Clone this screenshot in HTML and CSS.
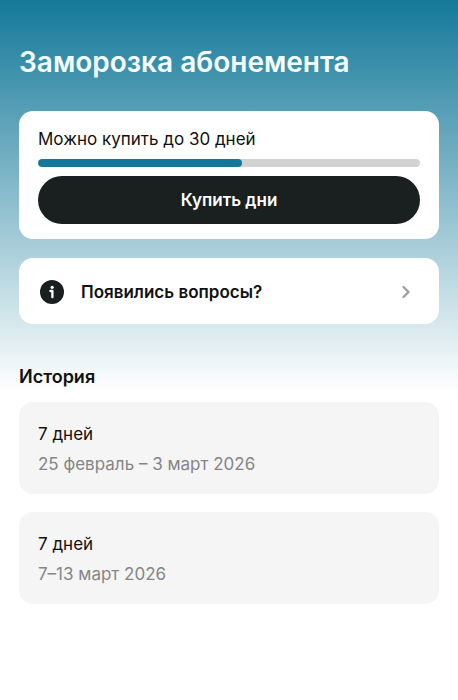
FILE: index.html
```html
<!DOCTYPE html>
<html lang="ru">
<head>
<meta charset="utf-8">
<meta name="viewport" content="width=device-width, initial-scale=1">
<title>Заморозка абонемента</title>
<link rel="stylesheet" href="styles.css">
</head>
<body>
<main class="page">
  <h1 class="title">Заморозка абонемента</h1>
  <section class="card purchase">
    <p class="purchase-label" id="days-label">Можно купить до 30 дней</p>
    <div class="progress" role="progressbar" aria-labelledby="days-label" aria-valuemin="0" aria-valuemax="30" aria-valuenow="16"><div class="progress-fill"></div></div>
    <button class="buy" type="button">Купить дни</button>
  </section>
  <a class="card help" href="#">
    <svg class="info" viewBox="0 0 24 24" aria-hidden="true"><circle cx="12" cy="12" r="12" fill="#1a1f1f"/><circle cx="12.2" cy="7.3" r="1.6" fill="#fff"/><path d="M10.4 11h2v6.2" fill="none" stroke="#fff" stroke-width="2.3" stroke-linecap="round" stroke-linejoin="round"/></svg>
    <span class="help-text">Появились вопросы?</span>
    <svg class="chevron" viewBox="0 0 10 14" aria-hidden="true"><path d="M2.5 2 7.5 7 2.5 12" fill="none" stroke="#a0a0a0" stroke-width="2.4" stroke-linecap="round" stroke-linejoin="round"/></svg>
  </a>
  <section class="history">
    <h2 class="subtitle">История</h2>
    <ul class="list">
      <li class="entry"><p class="days">7 дней</p><p class="dates">25 февраль – 3 март 2026</p></li>
      <li class="entry"><p class="days">7 дней</p><p class="dates">7–13 март 2026</p></li>
    </ul>
  </section>
</main>
</body>
</html>
```
FILE: styles.css
```css
* { box-sizing: border-box; }
body, h1, h2, p, ul { margin: 0; padding: 0; }
body {
  min-height: 100vh;
  font-family: Inter, "Liberation Sans", sans-serif;
  color: #111;
  background: #fff linear-gradient(#147999, #fff) no-repeat 0 0 / 100% 392px;
}
.page { padding: 42px 19px 19px; }
.title { font-size: 28px; line-height: 40px; font-weight: 600; color: #f4fdff; }
.card { background: #fff; border-radius: 14px; }
.purchase { margin-top: 29px; padding: 16px 19px 15px; }
.purchase-label { font-size: 17px; line-height: 24px; }
.progress { height: 8px; margin-top: 8px; border-radius: 4px; background: #d2d2d2; overflow: hidden; }
.progress-fill { width: 53.3%; height: 100%; background: #147999; border-radius: 4px; }
.buy {
  display: block;
  width: 100%;
  height: 48px;
  margin-top: 9px;
  border: 0;
  border-radius: 24px;
  background: #1a1f1f;
  color: #fff;
  font: 600 17px/24px Inter, "Liberation Sans", sans-serif;
}
.help {
  display: flex;
  align-items: center;
  margin-top: 19px;
  padding: 22px 28px 20px 21px;
  color: #111;
  text-decoration: none;
}
.info { width: 24px; height: 24px; }
.help-text { flex: 1; margin-left: 17px; font-size: 17px; line-height: 24px; font-weight: 600; }
.chevron { width: 10px; height: 14px; }
.history { margin-top: 41px; }
.subtitle { font-size: 18px; line-height: 24px; font-weight: 600; }
.list { display: grid; gap: 18px; margin-top: 13px; list-style: none; }
.entry { padding: 20px 19px 18px; border-radius: 14px; background: #f5f5f5; }
.days { font-size: 17px; line-height: 24px; }
.dates { margin-top: 6px; font-size: 17px; line-height: 24px; color: #858585; }
```
